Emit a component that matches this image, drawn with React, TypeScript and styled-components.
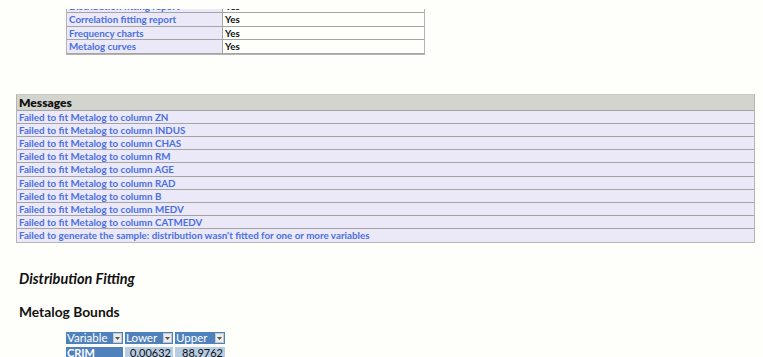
import React from 'react'
import styled, { createGlobalStyle } from 'styled-components'

const GlobalStyle = createGlobalStyle`
  html, body {
    margin: 0;
    padding: 0;
    background: #fefefa;
  }
  body {
    font-family: Lato, 'Open Sans', sans-serif;
    overflow: hidden;
  }
`

const options = [
  { name: 'Distribution fitting report', value: 'Yes' },
  { name: 'Correlation fitting report', value: 'Yes' },
  { name: 'Frequency charts', value: 'Yes' },
  { name: 'Metalog curves', value: 'Yes' },
]

const messages = [
  'Failed to fit Metalog to column ZN',
  'Failed to fit Metalog to column INDUS',
  'Failed to fit Metalog to column CHAS',
  'Failed to fit Metalog to column RM',
  'Failed to fit Metalog to column AGE',
  'Failed to fit Metalog to column RAD',
  'Failed to fit Metalog to column B',
  'Failed to fit Metalog to column MEDV',
  'Failed to fit Metalog to column CATMEDV',
  "Failed to generate the sample: distribution wasn't fitted for one or more variables",
]

const bounds = [{ variable: 'CRIM', lower: '0.00632', upper: '88.9762' }]

const DropArrow = () => (
  <DropButton>
    <svg width="5" height="3" viewBox="0 0 5 3">
      <path d="M0 0 L5 0 L2.5 3 Z" fill="#555" />
    </svg>
  </DropButton>
)

const App = () => {
  return (
    <Page>
      <GlobalStyle />
      <OptionsClip>
        <OptionsTable>
          {options.map((opt) => (
            <OptionRow key={opt.name}>
              <OptionName>{opt.name}</OptionName>
              <OptionValue>{opt.value}</OptionValue>
            </OptionRow>
          ))}
        </OptionsTable>
      </OptionsClip>

      <MessagesTable>
        <MessagesHeader>Messages</MessagesHeader>
        {messages.map((msg) => (
          <MessageRow key={msg}>{msg}</MessageRow>
        ))}
      </MessagesTable>

      <SectionTitle>Distribution Fitting</SectionTitle>
      <SubTitle>Metalog Bounds</SubTitle>

      <BoundsTable>
        <BoundsRow>
          <HeadCell>
            Variable
            <DropArrow />
          </HeadCell>
          <HeadCell>
            Lower
            <DropArrow />
          </HeadCell>
          <HeadCell>
            Upper
            <DropArrow />
          </HeadCell>
        </BoundsRow>
        {bounds.map((b) => (
          <BoundsRow key={b.variable}>
            <KeyCell>{b.variable}</KeyCell>
            <NumCell>{b.lower}</NumCell>
            <NumCell>{b.upper}</NumCell>
          </BoundsRow>
        ))}
      </BoundsTable>
    </Page>
  )
}

const Page = styled.div`
  display: flex;
  flex-direction: column;
  align-items: flex-start;
`

const OptionsClip = styled.div`
  margin: 9px 0 0 66px;
  overflow: hidden;
`

const OptionsTable = styled.div`
  width: 357px;
  margin-top: -9px;
  border: 1px solid #b4b4b4;
  border-top: none;
`

const OptionRow = styled.div`
  display: grid;
  grid-template-columns: 156px 1fr;
  height: 13.4px;
  box-sizing: border-box;
  border-bottom: 1px solid #a4a4a4;
  font-size: 9.8px;
  line-height: 12px;
  font-weight: 700;
`

const OptionName = styled.div`
  background: #ebe9f8;
  color: #4a6fe3;
  padding-left: 2px;
  border-right: 1px solid #a4a4a4;
  white-space: nowrap;
`

const OptionValue = styled.div`
  background: #fefefa;
  color: #111;
  padding-left: 2px;
`

const MessagesTable = styled.div`
  margin: 39px 0 0 16px;
  width: 737px;
  border: 1px solid #b4b4b4;
  border-top: 1px solid #c8c8c0;
`

const MessagesHeader = styled.div`
  height: 16px;
  box-sizing: border-box;
  background: #d4d4cf;
  border-bottom: 1px solid #a4a4a4;
  color: #111;
  font-size: 12px;
  font-weight: 800;
  line-height: 15px;
  padding-left: 2px;
`

const MessageRow = styled.div`
  height: 13.2px;
  box-sizing: border-box;
  background: #ebe9f8;
  border-bottom: 1px solid #a4a4a4;
  color: #4a6fe3;
  font-size: 9.8px;
  font-weight: 700;
  line-height: 12px;
  padding-left: 2px;
  white-space: nowrap;

  &:last-child {
    border-bottom: none;
  }
`

const SectionTitle = styled.div`
  margin: 28px 0 0 19px;
  font-size: 14.5px;
  font-weight: 700;
  font-style: italic;
  color: #111;
  line-height: 16px;
`

const SubTitle = styled.div`
  margin: 17px 0 0 19px;
  font-size: 13.8px;
  font-weight: 700;
  color: #111;
  line-height: 16px;
`

const BoundsTable = styled.div`
  margin: 12px 0 0 66px;
  display: flex;
  flex-direction: column;
  gap: 3px;
`

const BoundsRow = styled.div`
  display: grid;
  grid-template-columns: 57px 48px 50px;
  column-gap: 2px;
`

const HeadCell = styled.div`
  height: 12px;
  background: #4f81bd;
  color: #fff;
  font-size: 11.5px;
  line-height: 12px;
  display: flex;
  align-items: center;
  justify-content: space-between;
  padding: 0 1px 0 1px;
`

const DropButton = styled.span`
  width: 9px;
  height: 10px;
  box-sizing: border-box;
  background: #ececec;
  border: 1px solid #c8c8c8;
  display: flex;
  align-items: center;
  justify-content: center;
`

const KeyCell = styled.div`
  height: 12px;
  background: #4f81bd;
  color: #fff;
  font-size: 11px;
  font-weight: 700;
  line-height: 12px;
  padding-left: 1px;
`

const NumCell = styled.div`
  height: 12px;
  background: #b8cce4;
  color: #111;
  font-size: 11px;
  line-height: 12px;
  text-align: right;
  padding-right: 2px;
`

export default App
